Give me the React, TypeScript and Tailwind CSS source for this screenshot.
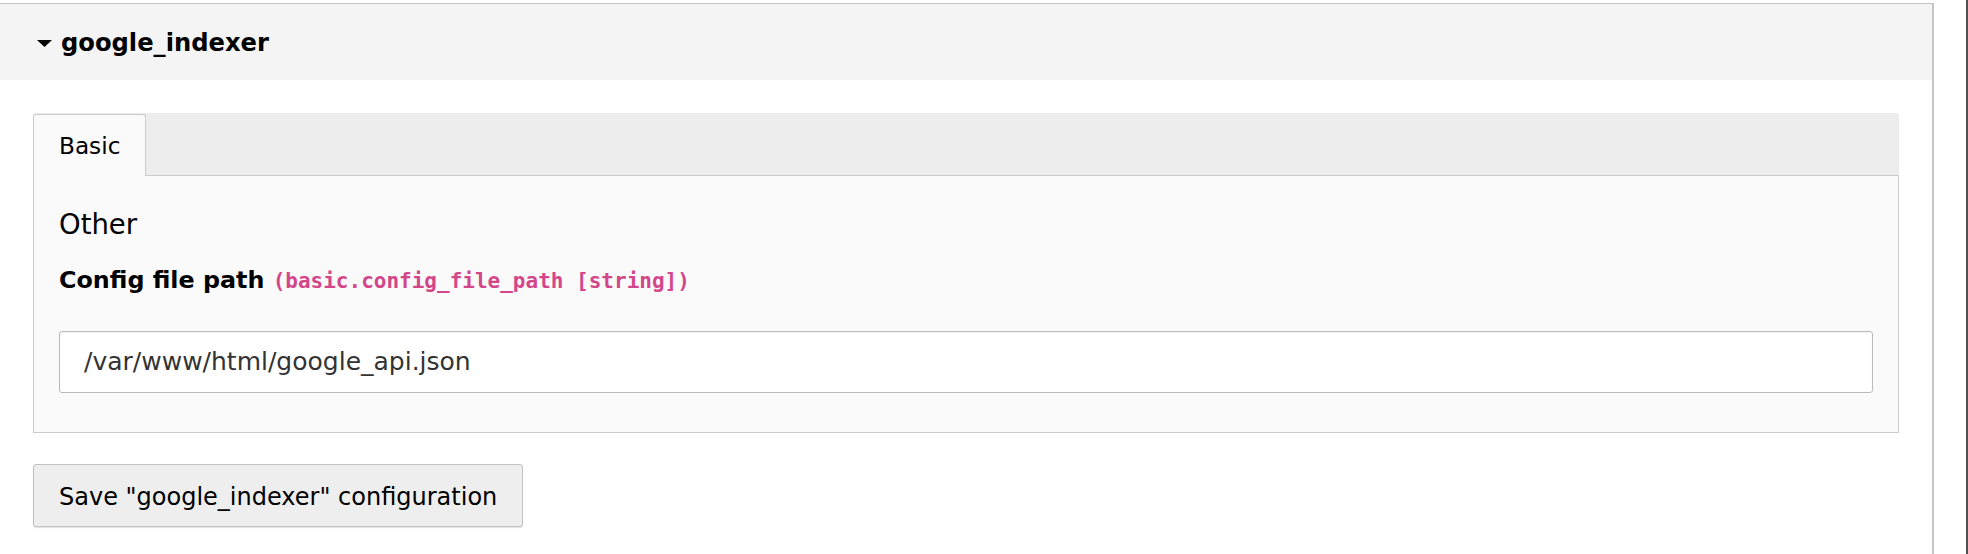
import React from "react";

export default function App() {
  return (
    <div className="flex min-h-[554px] w-full bg-white text-black" style={{ fontFamily: '"DejaVu Sans", Verdana, sans-serif' }}>
      <div className="mt-[3px] w-[1934px] shrink-0 border-t border-r-2 border-t-[#c3c3c3] border-r-[#c6c6c6] bg-white">
        {/* Header */}
        <div className="flex h-[76px] items-center bg-[#f4f4f4] pl-[37px] pt-[2px]">
          <svg width="15" height="7" viewBox="0 0 15 7" className="mr-[9px] mt-[1px]">
            <polygon points="0,0 15,0 7.5,7" fill="#000" />
          </svg>
          <span className="text-[24.2px] font-bold leading-[28px]">google_indexer</span>
        </div>

        <div className="px-[33px] pt-[33px]">
          {/* Tabs */}
          <div className="flex h-[63px] rounded-t-[3px] border-b border-[#cccccc] bg-[#ededed] pt-px">
            <div className="-mb-px flex h-[62px] items-center rounded-t-[3px] border border-b-0 border-[#cccccc] bg-[#fafafa] px-[25px]">
              <span className="text-[23.2px] leading-[27px]">Basic</span>
            </div>
          </div>

          {/* Panel body */}
          <div className="border border-t-0 border-[#cccccc] bg-[#fafafa] px-[25px] pt-[32px] pb-[39px]">
            <div className="mb-[26px] text-[27.5px] leading-[32px]">Other</div>
            <div className="mb-[36px] text-[23.8px] font-bold leading-[28px]">
              Config file path{" "}
              <span
                className="text-[21px] font-bold text-[#d4468a]"
                style={{ fontFamily: '"DejaVu Sans Mono", monospace' }}
              >
                (basic.config_file_path [string])
              </span>
            </div>
            <div className="flex h-[62px] items-center rounded-[3px] border border-[#bbbbbb] bg-white pl-[24px] shadow-[inset_0_1px_2px_rgba(0,0,0,0.06)]">
              <span className="text-[25px] leading-[30px] text-[#333333]">/var/www/html/google_api.json</span>
            </div>
          </div>

          {/* Button */}
          <div className="pt-[31px]">
            <button className="flex h-[63px] items-center rounded-[3px] border border-[#c2c2c2] bg-[#eeeeee] px-[25px] pt-[2px] text-[24px] leading-[28px] text-black shadow-[0_1px_1px_rgba(0,0,0,0.12)]">
              Save "google_indexer" configuration
            </button>
          </div>
        </div>
      </div>
      <div className="flex-1 border-r-2 border-[#505050] bg-white" />
    </div>
  );
}
